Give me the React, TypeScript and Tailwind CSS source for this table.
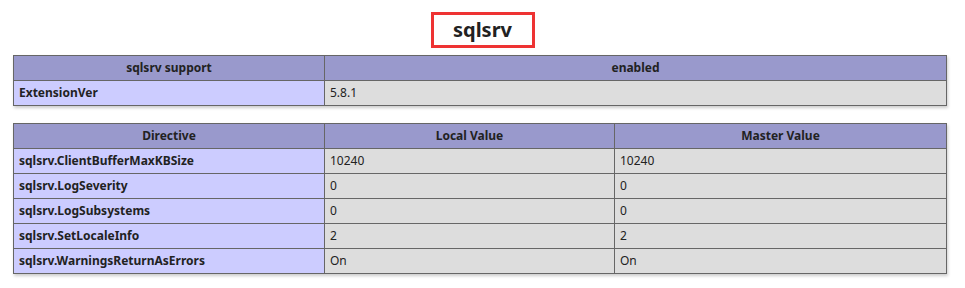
const font = { fontFamily: '"Noto Sans", "Open Sans", Arial, sans-serif' };

const directives: [string, string, string][] = [
  ["sqlsrv.ClientBufferMaxKBSize", "10240", "10240"],
  ["sqlsrv.LogSeverity", "0", "0"],
  ["sqlsrv.LogSubsystems", "0", "0"],
  ["sqlsrv.SetLocaleInfo", "2", "2"],
  ["sqlsrv.WarningsReturnAsErrors", "On", "On"],
];

const th = "border border-[#666] bg-[#9999cc] px-[5px] h-[25px] text-[12px] font-bold text-center text-[#222]";
const e = "border border-[#666] bg-[#ccccff] px-[5px] h-[25px] text-[12px] font-bold text-[#222] w-[311px]";
const v = "border border-[#666] bg-[#dddddd] px-[5px] h-[25px] text-[12px] text-[#222]";

export default function App() {
  return (
    <div className="w-[965px] h-[288px] bg-white pt-[12px]" style={font}>
      <div className="flex justify-center">
        <h2 className="border-[3px] border-[#ee3333] w-[104px] h-[36px] flex items-center justify-center text-[20px] font-bold text-[#222] leading-none">
          sqlsrv
        </h2>
      </div>

      <table className="ml-[13px] mt-[7px] w-[934px] border-collapse shadow-[1px_2px_3px_#ccc]">
        <tbody>
          <tr>
            <th className={th + " w-[311px]"}>sqlsrv support</th>
            <th className={th}>enabled</th>
          </tr>
          <tr>
            <td className={e}>ExtensionVer</td>
            <td className={v}>5.8.1</td>
          </tr>
        </tbody>
      </table>

      <table className="ml-[13px] mt-[17px] w-[934px] border-collapse shadow-[1px_2px_3px_#ccc]">
        <tbody>
          <tr>
            <th className={th + " w-[311px]"}>Directive</th>
            <th className={th + " w-[290px]"}>Local Value</th>
            <th className={th}>Master Value</th>
          </tr>
          {directives.map(([name, local, master]) => (
            <tr key={name}>
              <td className={e}>{name}</td>
              <td className={v}>{local}</td>
              <td className={v}>{master}</td>
            </tr>
          ))}
        </tbody>
      </table>
    </div>
  );
}
